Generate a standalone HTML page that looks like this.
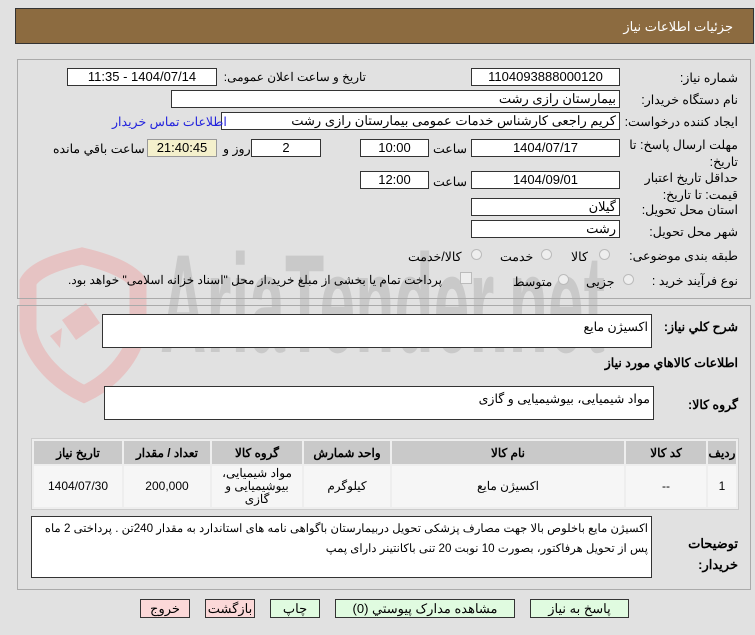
<!DOCTYPE html>
<html><head><meta charset="utf-8"><style>
*{box-sizing:border-box;margin:0;padding:0}
body{width:755px;height:635px;background:#e1e1e1;font-family:"Liberation Sans","Noto Sans CJK SC",sans-serif;font-size:12px;position:relative;overflow:hidden;color:#000}
.a{position:absolute}
.hdr{left:15px;top:8px;width:739px;height:36px;background:#8c6b40;border:1px solid #333}
.hdr span{position:absolute;right:20px;top:10px;color:#fff;font-size:13px}
.panel{border:1px solid #aaa;}
.in{position:absolute;background:#fff;border:1px solid #333;height:18px;font-size:13px;line-height:16px;text-align:center;direction:rtl;white-space:nowrap;overflow:hidden}
.inr{text-align:right;padding-right:3px}
.l{position:absolute;direction:rtl;white-space:nowrap;font-size:12.5px}
.rad{position:absolute;width:11px;height:11px;border-radius:50%;border:1px solid #bbb;background:#eee}
.ta{position:absolute;background:#fff;border:1px solid #333;direction:rtl;font-size:12px;padding:3px;line-height:19px}
table{border-collapse:separate;border-spacing:2px;position:absolute;left:31px;top:438px;width:708px;background:#eee;border:1px solid #ccc;direction:rtl}
th{background:#c9c9c9;height:23px;font-size:12px;font-weight:bold;padding:0}
td{background:#f6f6f6;height:41px;text-align:center;font-size:12px;line-height:13px;padding:0}
.btn{position:absolute;top:599px;height:19px;border:1px solid #333;font-size:13px;line-height:17px;text-align:center;direction:rtl}
</style></head><body>
<div class="a hdr"><span>جزئیات اطلاعات نیاز</span></div>
<!-- watermark -->
<svg class="a" style="left:0;top:0" width="755" height="635">
<path d="M82 256 C55 262 35 270 28 282 L28 330 C34 360 60 383 84 394 C108 383 132 360 138 330 L138 282 C128 270 108 262 82 256Z" fill="none" stroke="#e6c3c3" stroke-width="17"/>
<path d="M62 320 L86 303 L100 323 L76 340 Z" fill="#e6c3c3"/><path d="M60 348 L50 336 L62 328 Z" fill="#e6c3c3"/>
<text x="160" y="352" font-family="Liberation Sans" font-weight="bold" font-size="140" fill="#c9c9c9" textLength="445" lengthAdjust="spacingAndGlyphs">AriaTender.net</text>
</svg>
<div class="a panel" style="left:17px;top:59px;width:734px;height:240px"></div>
<div class="a panel" style="left:17px;top:305px;width:734px;height:285px"></div>

<div class="l" style="right:17px;top:70px">شماره نیاز:</div>
<div class="in" style="left:471px;top:68px;width:149px">1104093888000120</div>
<div class="l" style="right:389px;top:70px;font-size:12px">تاریخ و ساعت اعلان عمومی:</div>
<div class="in" style="left:67px;top:68px;width:150px">1404/07/14 - 11:35</div>

<div class="l" style="right:17px;top:92px">نام دستگاه خریدار:</div>
<div class="in inr" style="left:171px;top:90px;width:449px">بیمارستان رازی رشت</div>

<div class="l" style="right:17px;top:114px">ایجاد کننده درخواست:</div>
<div class="in inr" style="left:221px;top:112px;width:399px">کریم راجعی کارشناس خدمات عمومی بیمارستان رازی رشت</div>
<div class="l" style="left:112px;top:114px;color:#2222dd">اطلاعات تماس خریدار</div>

<div class="l" style="right:17px;top:137px;line-height:17px;text-align:right">مهلت ارسال پاسخ: تا<br>تاریخ:</div>
<div class="in" style="left:471px;top:139px;width:149px">1404/07/17</div>
<div class="l" style="left:433px;top:141px">ساعت</div>
<div class="in" style="left:360px;top:139px;width:69px">10:00</div>
<div class="in" style="left:251px;top:139px;width:70px">2</div>
<div class="l" style="left:223px;top:141px">روز و</div>
<div class="in" style="left:147px;top:139px;width:70px;background:#f4f0cc;border-color:#999">21:40:45</div>
<div class="l" style="left:53px;top:141px">ساعت باقي مانده</div>

<div class="l" style="right:17px;top:170px;line-height:17px;text-align:right">حداقل تاریخ اعتبار<br>قیمت: تا تاریخ:</div>
<div class="in" style="left:471px;top:171px;width:149px">1404/09/01</div>
<div class="l" style="left:433px;top:174px">ساعت</div>
<div class="in" style="left:360px;top:171px;width:69px">12:00</div>

<div class="l" style="right:17px;top:202px">استان محل تحویل:</div>
<div class="in inr" style="left:471px;top:198px;width:149px">گیلان</div>
<div class="l" style="right:17px;top:224px">شهر محل تحویل:</div>
<div class="in inr" style="left:471px;top:220px;width:149px">رشت</div>

<div class="l" style="right:17px;top:248px">طبقه بندی موضوعی:</div>
<div class="rad" style="left:599px;top:249px"></div><div class="l" style="left:571px;top:249px">کالا</div>
<div class="rad" style="left:541px;top:249px"></div><div class="l" style="left:500px;top:249px">خدمت</div>
<div class="rad" style="left:471px;top:249px"></div><div class="l" style="left:408px;top:249px">کالا/خدمت</div>

<div class="l" style="right:17px;top:273px">نوع فرآیند خرید :</div>
<div class="rad" style="left:623px;top:274px"></div><div class="l" style="left:586px;top:274px">جزیی</div>
<div class="rad" style="left:558px;top:274px"></div><div class="l" style="left:513px;top:274px">متوسط</div>
<div class="a" style="left:460px;top:272px;width:12px;height:12px;border:1px solid #bbb;background:#eee"></div>
<div class="l" style="left:68px;top:273px;font-size:12px">پرداخت تمام یا بخشی از مبلغ خرید،از محل "اسناد خزانه اسلامی" خواهد بود.</div>

<div class="l" style="right:17px;top:319px;font-weight:bold">شرح کلي نیاز:</div>
<div class="ta" style="left:102px;top:314px;width:550px;height:34px;font-size:12.5px">اکسیژن مایع</div>
<div class="l" style="right:17px;top:355px;font-weight:bold">اطلاعات کالاهاي مورد نیاز</div>
<div class="l" style="right:17px;top:397px;font-weight:bold">گروه کالا:</div>
<div class="ta" style="left:104px;top:386px;width:550px;height:34px;font-size:12.5px">مواد شیمیایی، بیوشیمیایی و  گازی</div>

<table>
<tr><th style="width:28px">ردیف</th><th style="width:80px">کد کالا</th><th style="width:232px">نام کالا</th><th style="width:86px">واحد شمارش</th><th style="width:90px">گروه کالا</th><th style="width:86px">تعداد / مقدار</th><th>تاریخ نیاز</th></tr>
<tr><td>1</td><td>--</td><td>اکسیژن مایع</td><td>کیلوگرم</td><td>مواد شیمیایی،<br>بیوشیمیایی و<br>گازی</td><td>200,000</td><td>1404/07/30</td></tr>
</table>

<div class="l" style="right:17px;top:533px;font-weight:bold;line-height:21px;text-align:right;font-size:13px">توضیحات<br>خریدار:</div>
<div class="ta" style="left:31px;top:516px;width:621px;height:62px;font-size:11.6px;padding:2px 3px;line-height:20px;letter-spacing:-0.2px">اکسیژن مایع باخلوص بالا جهت مصارف پزشکی تحویل دربیمارستان باگواهی نامه های استاندارد به مقدار 240تن . پرداختی 2 ماه پس از تحویل هرفاکتور، بصورت 10 نوبت 20 تنی باکانتینر دارای پمپ</div>

<div class="btn" style="left:530px;width:99px;background:#e0fbe0">پاسخ به نیاز</div>
<div class="btn" style="left:335px;width:180px;background:#e0fbe0">مشاهده مدارک پیوستي (0)</div>
<div class="btn" style="left:270px;width:50px;background:#e0fbe0">چاپ</div>
<div class="btn" style="left:205px;width:50px;background:#fbd8d8">بازگشت</div>
<div class="btn" style="left:140px;width:50px;background:#fbd8d8">خروج</div>
</body></html>
